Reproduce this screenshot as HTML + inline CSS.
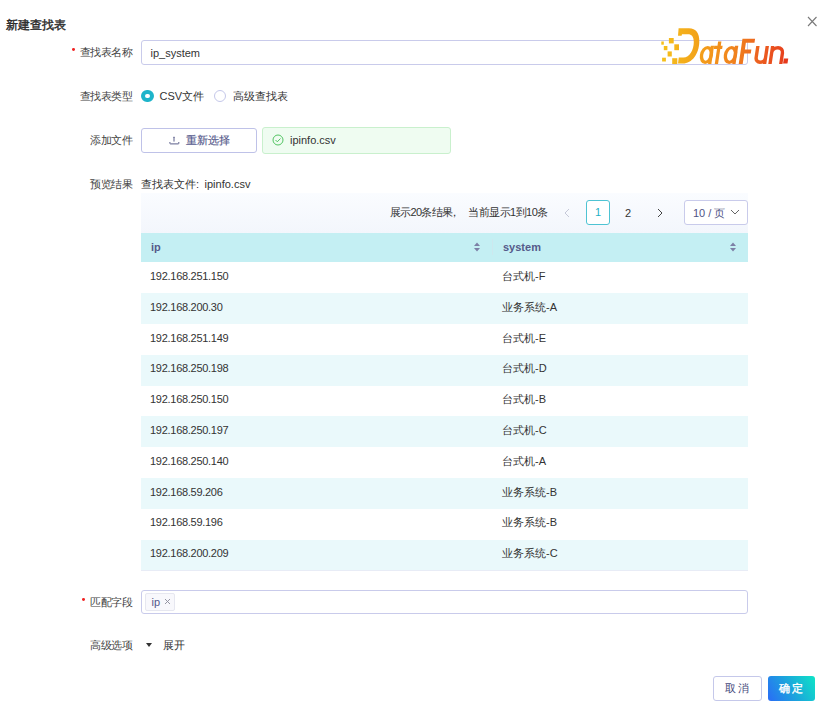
<!DOCTYPE html>
<html><head><meta charset="utf-8">
<style>
*{box-sizing:border-box;margin:0;padding:0}
html,body{width:832px;height:712px;overflow:hidden;background:#fff}
body{position:relative;font-family:"Liberation Sans",sans-serif;font-size:11px;color:#333}
.a{position:absolute;white-space:nowrap}
.lbl{position:absolute;right:700px;color:#444;font-size:11px;letter-spacing:-0.5px;line-height:14px;text-align:right}
.req{display:inline-block;width:3.4px;height:3.2px;border-radius:50%;background:#f02020;margin-right:4.6px;vertical-align:5px}
.box{position:absolute;border:1px solid #c9cbeb;border-radius:3px;background:#fff}
.row{position:absolute;left:141px;width:607px;height:30.8px}
.row.s{background:#eaf9fb}
.c1{left:150px;line-height:14px;color:#333;letter-spacing:-0.28px}
.c2{left:502px;line-height:14px;color:#333}
</style></head>
<body>
<div class="a" style="left:6px;top:17px;font-size:12px;font-weight:normal;-webkit-text-stroke:0.4px #2a2a2a;color:#2a2a2a;line-height:16px">新建查找表</div>
<svg class="a" style="left:806px;top:15px" width="12" height="13" viewBox="0 0 12 13"><path d="M2 2 L10.5 11 M10.5 2 L2 11" stroke="#7a7a7a" stroke-width="1.1" fill="none"/></svg>

<div class="lbl" style="top:45px"><span class="req"></span>查找表名称</div>
<div class="box" style="left:141px;top:40px;width:607px;height:25px"></div>
<div class="a" style="left:150.5px;top:46px;line-height:14px;color:#333">ip_system</div>

<div class="lbl" style="top:89px">查找表类型</div>
<div class="a" style="left:141px;top:89.5px;width:12.5px;height:12.5px;border-radius:50%;border:4px solid #1eb4ca;background:#fff"></div>
<div class="a" style="left:159.6px;top:89px;line-height:14px;color:#333">CSV文件</div>
<div class="a" style="left:214px;top:90px;width:12px;height:12px;border-radius:50%;border:1px solid #c5c8ea;background:#fff"></div>
<div class="a" style="left:233px;top:89px;line-height:14px;color:#333">高级查找表</div>

<div class="lbl" style="top:133px">添加文件</div>
<div class="box" style="left:141px;top:128px;width:116px;height:25px;border-color:#bfc2e8"></div>
<svg class="a" style="left:168px;top:134px" width="12" height="12" viewBox="0 0 12 12"><path d="M6 3 V7.6" stroke="#5b5f8a" stroke-width="1" fill="none"/><path d="M4.9 3.6 L6 2.4 L7.1 3.6 Z" fill="#5b5f8a"/><path d="M1.9 8 V9.4 Q1.9 9.9 2.4 9.9 H10.3 Q10.8 9.9 10.8 9.4 V8" stroke="#5b5f8a" stroke-width="1" fill="none"/></svg>
<div class="a" style="left:186px;top:133px;line-height:14px;color:#53578a;-webkit-text-stroke:0.15px #53578a">重新选择</div>
<div class="a" style="left:262px;top:127px;width:189px;height:27px;border:1px solid #c9f0cd;border-radius:3px;background:#effcf1"></div>
<svg class="a" style="left:272px;top:134px" width="12" height="12" viewBox="0 0 12 12"><circle cx="6" cy="6" r="5" stroke="#52c463" stroke-width="1" fill="none"/><path d="M3.5 6 L5.3 7.8 L8.5 4.5" stroke="#52c463" stroke-width="1" fill="none"/></svg>
<div class="a" style="left:290px;top:133px;line-height:14px;color:#333">ipinfo.csv</div>

<div class="lbl" style="top:177px">预览结果</div>
<div class="a" style="left:141px;top:177px;line-height:14px;color:#333">查找表文件:<span style="margin-left:5.5px">ipinfo.csv</span></div>

<div class="a" style="left:141px;top:193px;width:607px;height:40px;background:linear-gradient(#fafcff,#f3f6fc)"></div>
<div class="a" style="left:390px;top:205px;line-height:14px;color:#333;letter-spacing:-0.7px">展示20条结果</div><div class="a" style="left:448.5px;top:205px;line-height:14px;color:#333">，</div><div class="a" style="left:468px;top:205px;line-height:14px;color:#333;letter-spacing:-0.5px">当前显示1到10条</div>
<svg class="a" style="left:563px;top:208px" width="8" height="10" viewBox="0 0 8 10"><path d="M6 1 L2 5 L6 9" stroke="#c5c8d8" stroke-width="1" fill="none"/></svg>
<div class="a" style="left:586px;top:200px;width:24px;height:25px;border:1px solid #4ec3d3;border-radius:3px;background:#fff;color:#1fb1c6;text-align:center;line-height:23px">1</div>
<div class="a" style="left:625px;top:201px;line-height:25px;color:#333">2</div>
<svg class="a" style="left:656px;top:208px" width="8" height="10" viewBox="0 0 8 10"><path d="M2 1 L6 5 L2 9" stroke="#444" stroke-width="1" fill="none"/></svg>
<div class="a" style="left:684px;top:200px;width:64px;height:25px;border:1px solid #c9cbeb;border-radius:3px;background:#fff"></div>
<div class="a" style="left:693px;top:206px;line-height:14px;color:#4f5385">10 / 页</div>
<svg class="a" style="left:730px;top:208px" width="10" height="8" viewBox="0 0 10 8"><path d="M1 2 L5 6 L9 2" stroke="#666" stroke-width="1" fill="none"/></svg>

<div class="a" style="left:141px;top:233px;width:607px;height:29.4px;background:#c4eff3"></div>
<div class="a" style="left:151px;top:240px;line-height:14px;font-weight:bold;color:#555a8a">ip</div>
<svg class="a" style="left:473px;top:241px" width="8" height="12" viewBox="0 0 8 12"><path d="M1 5 L4 1.5 L7 5 Z M1 7 L4 10.5 L7 7 Z" fill="#7d80a6"/></svg>
<div class="a" style="left:491.5px;top:239px;width:1px;height:16px;background:#cde8ee"></div>
<div class="a" style="left:503px;top:240px;line-height:14px;font-weight:bold;color:#555a8a">system</div>
<svg class="a" style="left:729px;top:241px" width="8" height="12" viewBox="0 0 8 12"><path d="M1 5 L4 1.5 L7 5 Z M1 7 L4 10.5 L7 7 Z" fill="#7d80a6"/></svg>

<div class="a" style="left:141px;top:293.2px;width:607px;height:30.8px;background:#eaf9fb"></div>
<div class="a" style="left:141px;top:354.8px;width:607px;height:30.8px;background:#eaf9fb"></div>
<div class="a" style="left:141px;top:416.4px;width:607px;height:30.8px;background:#eaf9fb"></div>
<div class="a" style="left:141px;top:478.0px;width:607px;height:30.8px;background:#eaf9fb"></div>
<div class="a" style="left:141px;top:539.6px;width:607px;height:31.0px;background:#eaf9fb"></div>
<div class="a c1" style="top:269px">192.168.251.150</div><div class="a c2" style="top:269px">台式机-F</div>
<div class="a c1" style="top:300px">192.168.200.30</div><div class="a c2" style="top:300px">业务系统-A</div>
<div class="a c1" style="top:331px">192.168.251.149</div><div class="a c2" style="top:331px">台式机-E</div>
<div class="a c1" style="top:361px">192.168.250.198</div><div class="a c2" style="top:361px">台式机-D</div>
<div class="a c1" style="top:392px">192.168.250.150</div><div class="a c2" style="top:392px">台式机-B</div>
<div class="a c1" style="top:423px">192.168.250.197</div><div class="a c2" style="top:423px">台式机-C</div>
<div class="a c1" style="top:454px">192.168.250.140</div><div class="a c2" style="top:454px">台式机-A</div>
<div class="a c1" style="top:485px">192.168.59.206</div><div class="a c2" style="top:485px">业务系统-B</div>
<div class="a c1" style="top:515px">192.168.59.196</div><div class="a c2" style="top:515px">业务系统-B</div>
<div class="a c1" style="top:546px">192.168.200.209</div><div class="a c2" style="top:546px">业务系统-C</div>
<div class="a" style="left:141px;top:570.4px;width:607px;height:1px;background:#e8ecf6"></div>

<div class="lbl" style="top:595px"><span class="req"></span>匹配字段</div>
<div class="box" style="left:141px;top:590px;width:607px;height:24px"></div>
<div class="a" style="left:145px;top:593px;width:30px;height:18px;border:1px solid #e6e7f0;border-radius:2px;background:#f8f8fc"></div>
<div class="a" style="left:151.5px;top:595px;line-height:14px;color:#53578a">ip</div><svg class="a" style="left:164px;top:598px" width="7" height="7" viewBox="0 0 7 7"><path d="M1 1 L6 6 M6 1 L1 6" stroke="#8a8a9a" stroke-width="0.9"/></svg>

<div class="lbl" style="top:638px">高级选项</div>
<svg class="a" style="left:145px;top:642px" width="8" height="6" viewBox="0 0 8 6"><path d="M1 1 L7 1 L4 5 Z" fill="#333"/></svg>
<div class="a" style="left:163px;top:638px;line-height:14px;color:#333">展开</div>

<div class="a" style="left:713px;top:676px;width:49px;height:25px;border:1px solid #c5c8ea;border-radius:3px;background:#fff;color:#464a7c;text-align:center;line-height:23px;letter-spacing:2px;text-indent:0px">取消</div>
<div class="a" style="left:768px;top:676px;width:47px;height:25px;border-radius:3px;background:linear-gradient(60deg,#2a6cf6 0%,#1ba6dc 50%,#0ee4c6 100%);color:#fff;-webkit-text-stroke:0.35px #fff;text-align:center;line-height:25px;letter-spacing:2px;text-indent:1px">确定</div>

<!-- logo -->
<svg class="a" style="left:650px;top:24px" width="145" height="44" viewBox="650 24 145 44">
<defs><linearGradient id="lg" gradientUnits="userSpaceOnUse" x1="698" y1="0" x2="790" y2="0"><stop offset="0" stop-color="#f4a01a"/><stop offset="0.4" stop-color="#f0801e"/><stop offset="0.65" stop-color="#ec6020"/><stop offset="1" stop-color="#e6381c"/></linearGradient>
<linearGradient id="dg" gradientUnits="userSpaceOnUse" x1="660" y1="0" x2="700" y2="0"><stop offset="0" stop-color="#f6c21c"/><stop offset="1" stop-color="#f2a01a"/></linearGradient></defs>
<g fill="url(#dg)">
<rect x="661.3" y="41.5" width="2.5" height="3.2"/>
<rect x="668.9" y="38" width="4.8" height="5.4"/>
<rect x="663.8" y="46" width="3.6" height="4.2"/>
<rect x="674.3" y="44.3" width="4.7" height="5.9"/>
<rect x="667.6" y="51.4" width="4.2" height="5.1"/>
<rect x="662.1" y="57.7" width="3.8" height="3.8"/>
<rect x="672.2" y="58.2" width="5.1" height="5.8"/>
<path d="M678.6 28.3 L689 28.3 C696 28.3 699.6 33 699.3 42 C699 54 692 63.5 683 63.5 L678 63.5 L678.8 57.6 L683.5 57.6 C689.5 57.6 693.8 50 693.8 42 C693.8 36.5 691.5 34.2 688 34.2 L682 34.2 L681.6 35.7 L678 35.7 Z"/>
</g>
<g transform="translate(0,64) skewX(-8.5) translate(0,-64)" fill="none" stroke="url(#lg)" stroke-width="3.3">
<ellipse cx="705.1" cy="55" rx="4.9" ry="7.4"/>
<path d="M709.7 45.7 V64"/>
<path d="M716.4 41.5 V64 M711.5 47.35 H719.9"/>
<ellipse cx="729.1" cy="55" rx="5" ry="7.4"/>
<path d="M733.9 45.7 V64"/>
<path d="M740.7 64 V40.7 H751.3 M740.7 51.5 H749.2" stroke-width="4"/>
<path d="M755.2 46.1 V57.6 A4.7 4.7 0 0 0 764.6 57.6 V46.1 M764.6 57.6 V64" stroke-width="3.4"/>
<path d="M770 64 V46.1 M770 53.1 A5.4 5.4 0 0 1 780.8 53.1 V64" stroke-width="3.4"/>
<rect x="783" y="58.4" width="4.4" height="5.2" fill="#e6381c" stroke="none"/>
</g>
</svg>
</body></html>
